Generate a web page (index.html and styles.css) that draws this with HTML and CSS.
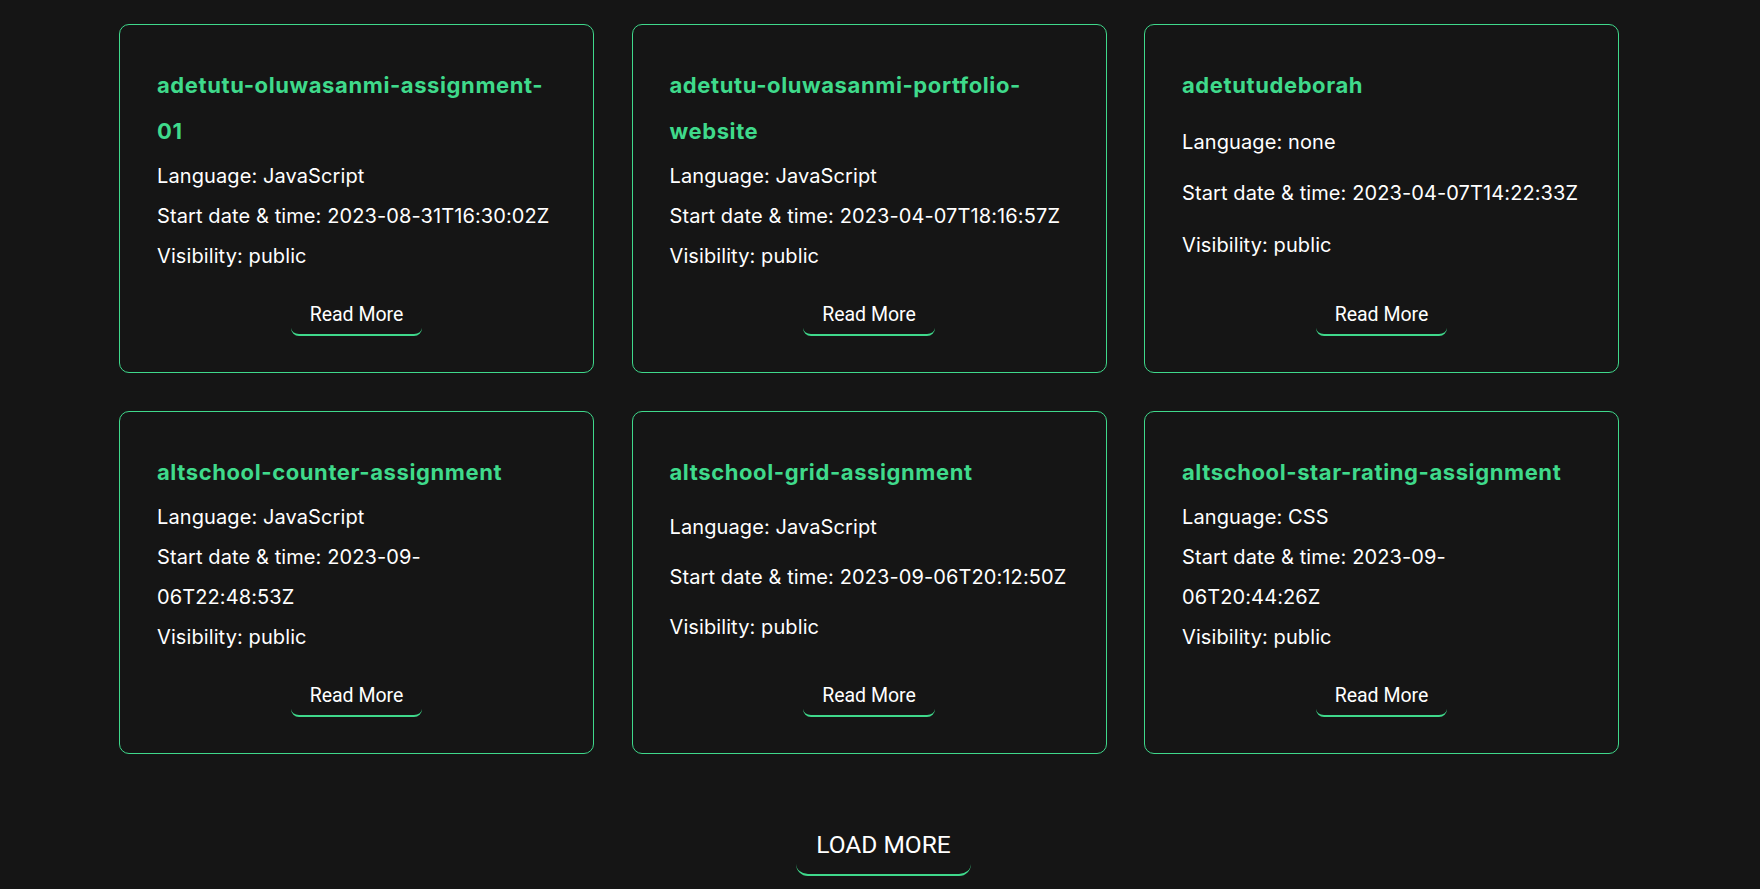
FILE: index.html
```html
<!DOCTYPE html>
<html lang="en">
<head>
<meta charset="utf-8">
<title>Repositories</title>
<link rel="stylesheet" href="styles.css">
</head>
<body>
<main class="page">
  <section class="grid">
    <article class="card">
      <h3 class="card-title">adetutu-oluwasanmi-assignment-01</h3>
      <p class="card-line">Language: JavaScript</p>
      <p class="card-line">Start date &amp; time: 2023-08-31T16:30:02Z</p>
      <p class="card-line">Visibility: public</p>
      <button class="read-more">Read More</button>
    </article>
    <article class="card">
      <h3 class="card-title">adetutu-oluwasanmi-portfolio-website</h3>
      <p class="card-line">Language: JavaScript</p>
      <p class="card-line">Start date &amp; time: 2023-04-07T18:16:57Z</p>
      <p class="card-line">Visibility: public</p>
      <button class="read-more">Read More</button>
    </article>
    <article class="card">
      <h3 class="card-title">adetutudeborah</h3>
      <p class="card-line">Language: none</p>
      <p class="card-line">Start date &amp; time: 2023-04-07T14:22:33Z</p>
      <p class="card-line">Visibility: public</p>
      <button class="read-more">Read More</button>
    </article>
    <article class="card">
      <h3 class="card-title">altschool-counter-assignment</h3>
      <p class="card-line">Language: JavaScript</p>
      <p class="card-line">Start date &amp; time: 2023-09-<br>06T22:48:53Z</p>
      <p class="card-line">Visibility: public</p>
      <button class="read-more">Read More</button>
    </article>
    <article class="card">
      <h3 class="card-title">altschool-grid-assignment</h3>
      <p class="card-line">Language: JavaScript</p>
      <p class="card-line">Start date &amp; time: 2023-09-06T20:12:50Z</p>
      <p class="card-line">Visibility: public</p>
      <button class="read-more">Read More</button>
    </article>
    <article class="card">
      <h3 class="card-title">altschool-star-rating-assignment</h3>
      <p class="card-line">Language: CSS</p>
      <p class="card-line">Start date &amp; time: 2023-09-<br>06T20:44:26Z</p>
      <p class="card-line">Visibility: public</p>
      <button class="read-more">Read More</button>
    </article>
  </section>
  <div class="load-wrap">
    <button class="load-more">LOAD MORE</button>
  </div>
</main>
</body>
</html>
```
FILE: styles.css
```css
* { box-sizing: border-box; }

html, body {
  margin: 0;
  padding: 0;
  background: #151515;
  height: 100%;
  overflow: hidden;
}

body {
  font-family: Inter, "Noto Sans", sans-serif;
  color: #ffffff;
}

.page {
  padding-top: 24px;
}

.grid {
  display: grid;
  grid-template-columns: repeat(3, 475px);
  column-gap: 37.5px;
  row-gap: 37.5px;
  margin-left: 119px;
}

.card {
  border: 1px solid #3fd88b;
  border-radius: 10px;
  padding: 37px 37px 36px;
  display: flex;
  flex-direction: column;
  justify-content: space-between;
}

.card-title {
  margin: 0 0 2px;
  color: #3fda8b;
  font-size: 22px;
  font-weight: 700;
  line-height: 46px;
  letter-spacing: 0.6px;
}

.card-line {
  margin: 0;
  font-size: 20px;
  line-height: 40px;
  letter-spacing: 0.1px;
  white-space: nowrap;
}

.read-more {
  align-self: center;
  margin-top: 20px;
  background: transparent;
  color: #ffffff;
  border: none;
  border-bottom: 2px solid #3fd88b;
  border-radius: 8px;
  padding: 8px 19px;
  font-family: Roboto, "Liberation Sans", sans-serif;
  font-size: 19.5px;
  line-height: 22px;
}

.load-wrap {
  display: flex;
  justify-content: center;
  margin-top: 61px;
  padding-left: 7px;
}

.load-more {
  background: transparent;
  color: #ffffff;
  border: none;
  border-bottom: 2px solid #3fd88b;
  border-radius: 12px;
  padding: 15px 20px;
  font-family: Roboto, "Liberation Sans", sans-serif;
  font-size: 24.5px;
  line-height: 29px;
}
```
